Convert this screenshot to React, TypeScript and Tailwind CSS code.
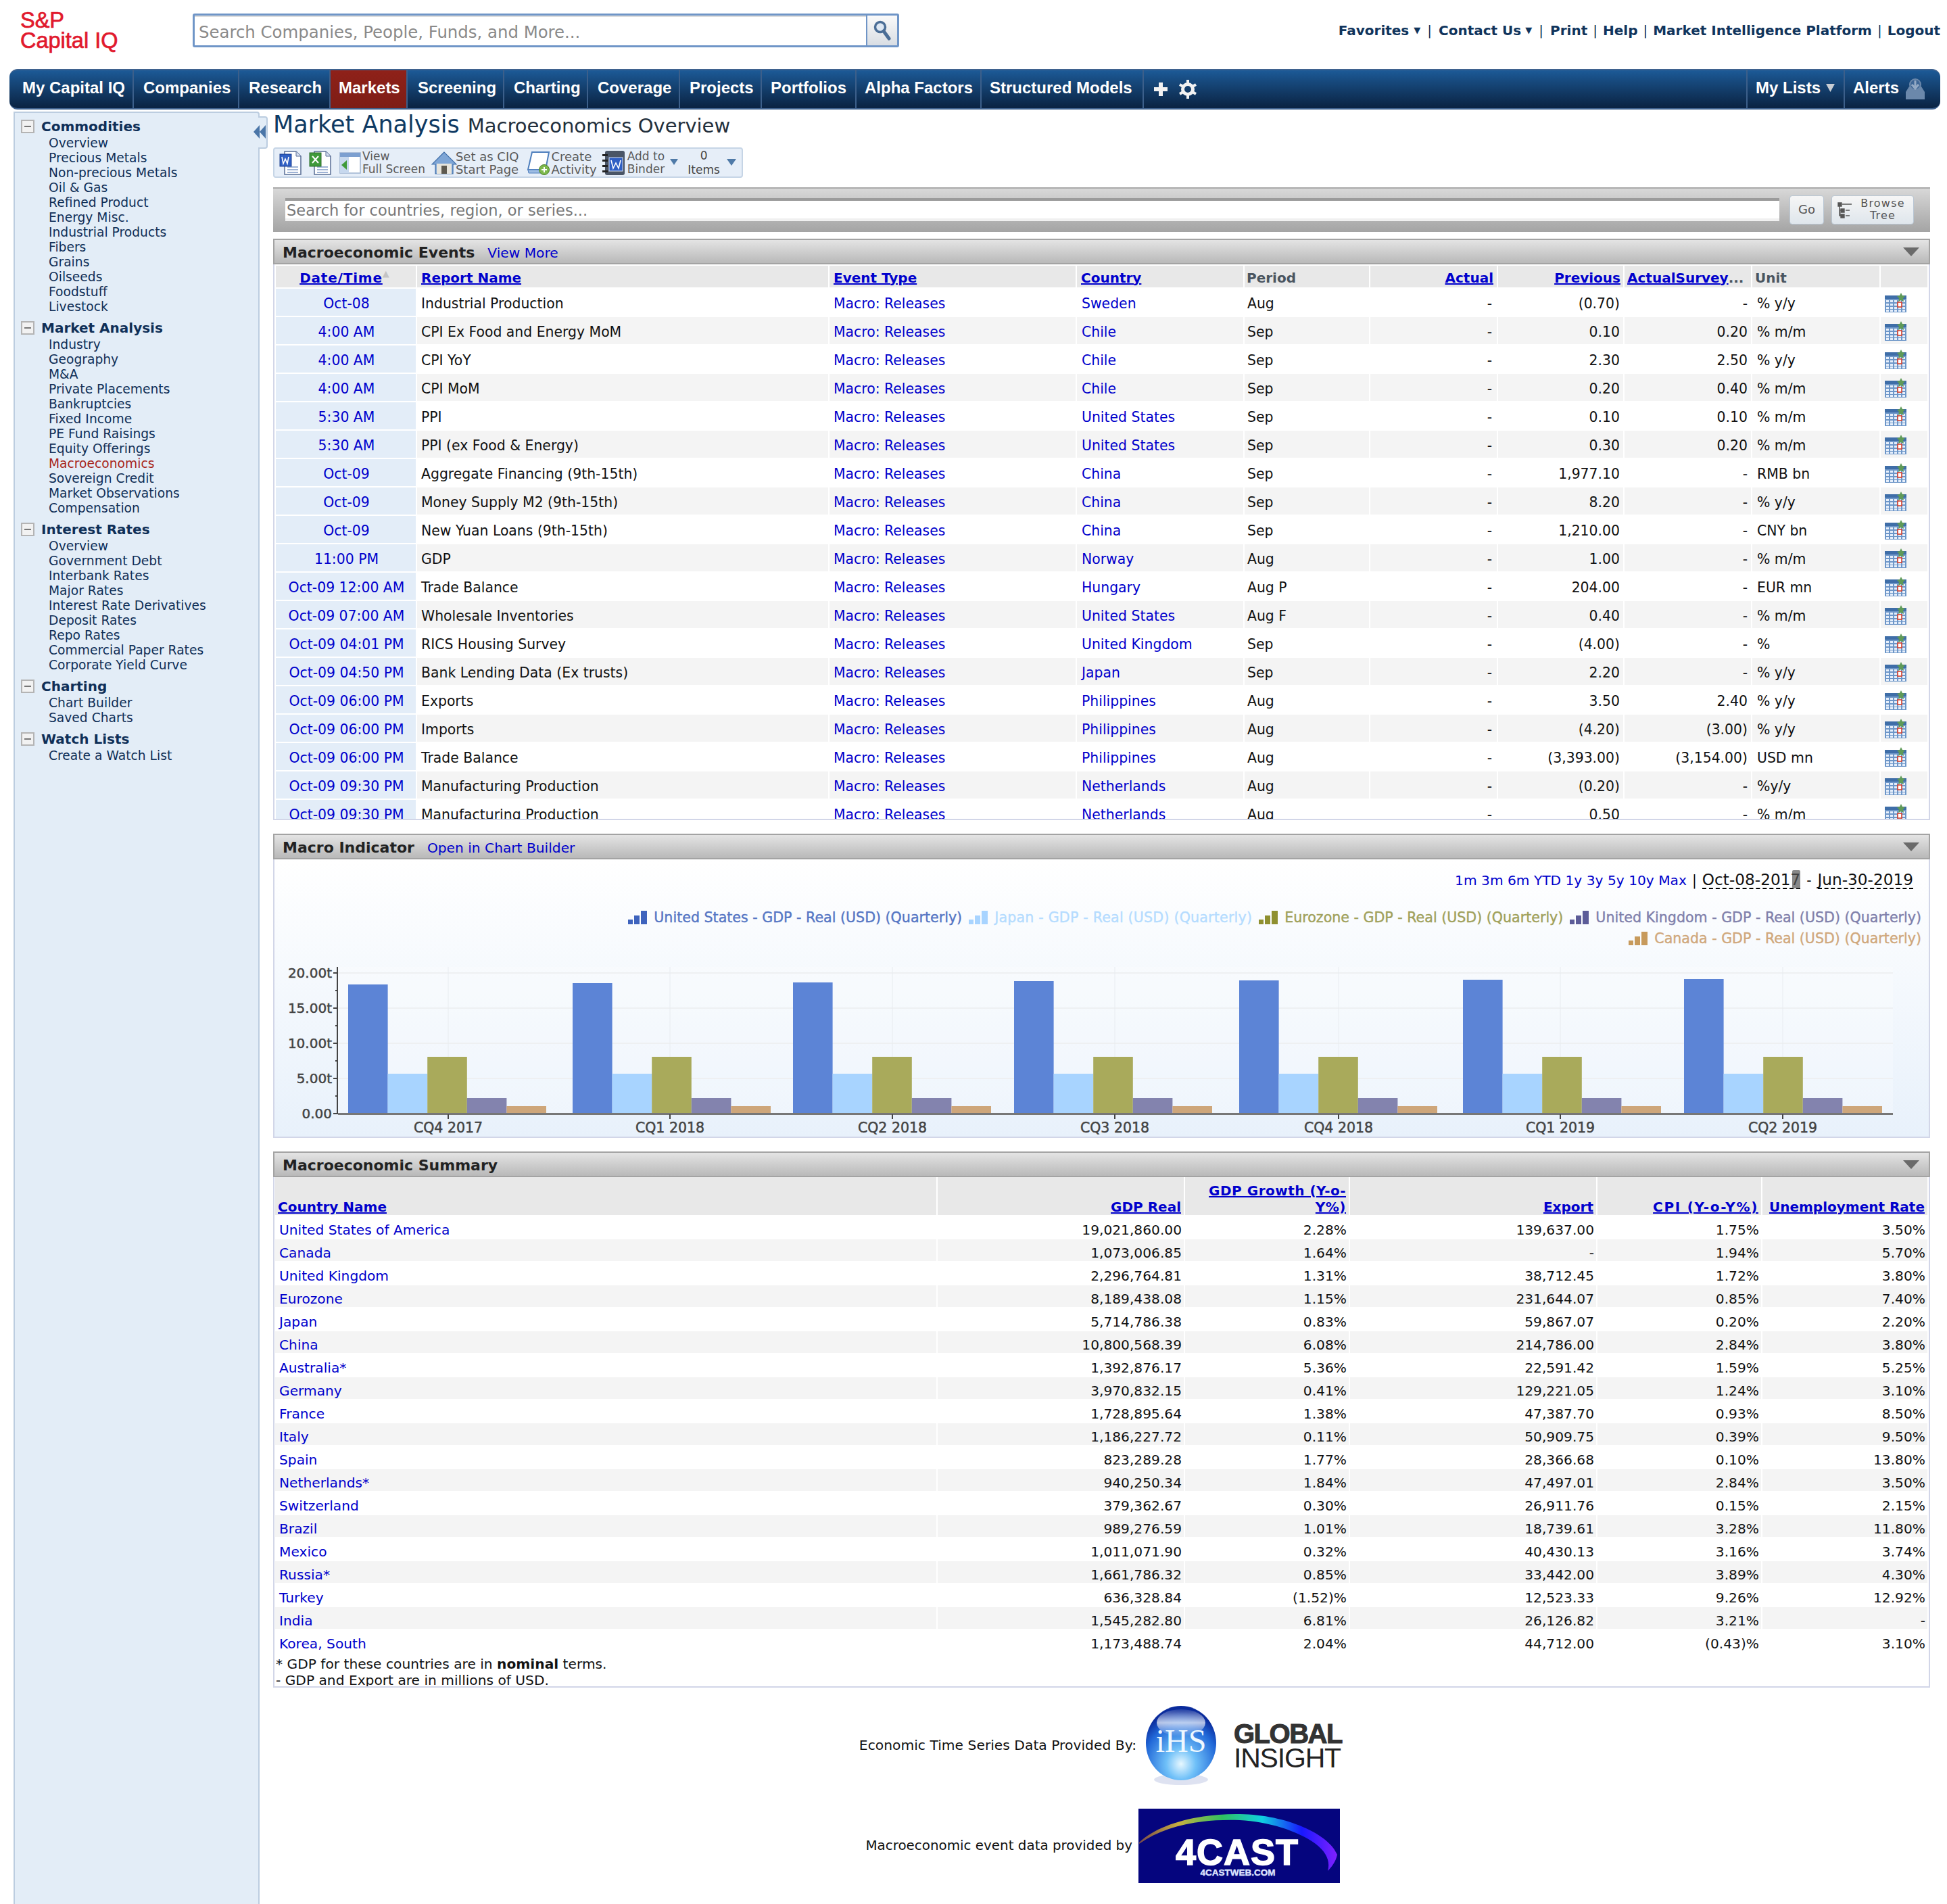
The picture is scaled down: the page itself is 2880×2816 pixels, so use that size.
import React from "react";

const VS = "font-['DejaVu_Sans',Verdana,sans-serif]";

const nav: [string, string][] = [
  ["My Capital IQ", "w-[184px] pl-[19px]"],
  ["Companies", "w-[156px] pl-[14px]"],
  ["Research", "w-[135px] pl-[14px]"],
  ["Markets", "w-[114px] pl-[12px] bg-linear-to-b from-[#8f2119] to-[#7d1d16]"],
  ["Screening", "w-[143px] pl-[15px]"],
  ["Charting", "w-[124px] pl-[14px]"],
  ["Coverage", "w-[136px] pl-[14px]"],
  ["Projects", "w-[121px] pl-[14px]"],
  ["Portfolios", "w-[140px] pl-[13px]"],
  ["Alpha Factors", "w-[185px] pl-[12px]"],
  ["Structured Models", "w-[240px] pl-[12px]"],
];

const side: [string, string[]][] = [
  ["Commodities", ["Overview", "Precious Metals", "Non-precious Metals", "Oil & Gas", "Refined Product", "Energy Misc.", "Industrial Products", "Fibers", "Grains", "Oilseeds", "Foodstuff", "Livestock"]],
  ["Market Analysis", ["Industry", "Geography", "M&A", "Private Placements", "Bankruptcies", "Fixed Income", "PE Fund Raisings", "Equity Offerings", "Macroeconomics", "Sovereign Credit", "Market Observations", "Compensation"]],
  ["Interest Rates", ["Overview", "Government Debt", "Interbank Rates", "Major Rates", "Interest Rate Derivatives", "Deposit Rates", "Repo Rates", "Commercial Paper Rates", "Corporate Yield Curve"]],
  ["Charting", ["Chart Builder", "Saved Charts"]],
  ["Watch Lists", ["Create a Watch List"]],
];

const ev: string[][] = [
  ["Oct-08", "Industrial Production", "Sweden", "Aug", "(0.70)", "-", "% y/y"],
  ["4:00 AM", "CPI Ex Food and Energy MoM", "Chile", "Sep", "0.10", "0.20", "% m/m"],
  ["4:00 AM", "CPI YoY", "Chile", "Sep", "2.30", "2.50", "% y/y"],
  ["4:00 AM", "CPI MoM", "Chile", "Sep", "0.20", "0.40", "% m/m"],
  ["5:30 AM", "PPI", "United States", "Sep", "0.10", "0.10", "% m/m"],
  ["5:30 AM", "PPI (ex Food & Energy)", "United States", "Sep", "0.30", "0.20", "% m/m"],
  ["Oct-09", "Aggregate Financing (9th-15th)", "China", "Sep", "1,977.10", "-", "RMB bn"],
  ["Oct-09", "Money Supply M2 (9th-15th)", "China", "Sep", "8.20", "-", "% y/y"],
  ["Oct-09", "New Yuan Loans (9th-15th)", "China", "Sep", "1,210.00", "-", "CNY bn"],
  ["11:00 PM", "GDP", "Norway", "Aug", "1.00", "-", "% m/m"],
  ["Oct-09 12:00 AM", "Trade Balance", "Hungary", "Aug P", "204.00", "-", "EUR mn"],
  ["Oct-09 07:00 AM", "Wholesale Inventories", "United States", "Aug F", "0.40", "-", "% m/m"],
  ["Oct-09 04:01 PM", "RICS Housing Survey", "United Kingdom", "Sep", "(4.00)", "-", "%"],
  ["Oct-09 04:50 PM", "Bank Lending Data (Ex trusts)", "Japan", "Sep", "2.20", "-", "% y/y"],
  ["Oct-09 06:00 PM", "Exports", "Philippines", "Aug", "3.50", "2.40", "% y/y"],
  ["Oct-09 06:00 PM", "Imports", "Philippines", "Aug", "(4.20)", "(3.00)", "% y/y"],
  ["Oct-09 06:00 PM", "Trade Balance", "Philippines", "Aug", "(3,393.00)", "(3,154.00)", "USD mn"],
  ["Oct-09 09:30 PM", "Manufacturing Production", "Netherlands", "Aug", "(0.20)", "-", "%y/y"],
  ["Oct-09 09:30 PM", "Manufacturing Production", "Netherlands", "Aug", "0.50", "-", "% m/m"],
];

const sum: string[][] = [
  ["United States of America", "19,021,860.00", "2.28%", "139,637.00", "1.75%", "3.50%"],
  ["Canada", "1,073,006.85", "1.64%", "-", "1.94%", "5.70%"],
  ["United Kingdom", "2,296,764.81", "1.31%", "38,712.45", "1.72%", "3.80%"],
  ["Eurozone", "8,189,438.08", "1.15%", "231,644.07", "0.85%", "7.40%"],
  ["Japan", "5,714,786.38", "0.83%", "59,867.07", "0.20%", "2.20%"],
  ["China", "10,800,568.39", "6.08%", "214,786.00", "2.84%", "3.80%"],
  ["Australia*", "1,392,876.17", "5.36%", "22,591.42", "1.59%", "5.25%"],
  ["Germany", "3,970,832.15", "0.41%", "129,221.05", "1.24%", "3.10%"],
  ["France", "1,728,895.64", "1.38%", "47,387.70", "0.93%", "8.50%"],
  ["Italy", "1,186,227.72", "0.11%", "50,909.75", "0.39%", "9.50%"],
  ["Spain", "823,289.28", "1.77%", "28,366.68", "0.10%", "13.80%"],
  ["Netherlands*", "940,250.34", "1.84%", "47,497.01", "2.84%", "3.50%"],
  ["Switzerland", "379,362.67", "0.30%", "26,911.76", "0.15%", "2.15%"],
  ["Brazil", "989,276.59", "1.01%", "18,739.61", "3.28%", "11.80%"],
  ["Mexico", "1,011,071.90", "0.32%", "40,430.13", "3.16%", "3.74%"],
  ["Russia*", "1,661,786.32", "0.85%", "33,442.00", "3.89%", "4.30%"],
  ["Turkey", "636,328.84", "(1.52)%", "12,523.33", "9.26%", "12.92%"],
  ["India", "1,545,282.80", "6.81%", "26,126.82", "3.21%", "-"],
  ["Korea, South", "1,173,488.74", "2.04%", "44,712.00", "(0.43)%", "3.10%"],
];

const LINK = "text-[#0000cc]";
const HLINK = "font-bold text-[20px] text-[#0000cc] underline";

function Minus() {
  return (
    <svg width="20" height="20" viewBox="0 0 20 20" className="shrink-0">
      <rect x="1" y="1" width="18" height="18" fill="#f2f2f2" stroke="#b4b4b4" strokeWidth="2" />
      <rect x="5" y="9" width="10" height="2" fill="#777" />
    </svg>
  );
}

function Tri({ c = "#666", w = 20, h = 12 }: { c?: string; w?: number; h?: number }) {
  return (
    <svg width={w} height={h} viewBox="0 0 20 12" className="shrink-0" preserveAspectRatio="none">
      <path d="M0 0H20L10 12Z" fill={c} />
    </svg>
  );
}

function Cal() {
  return (
    <svg width="32" height="29" viewBox="0 0 32 29">
      <rect x="0" y="4" width="32" height="25" fill="#6d96c8" />
      <rect x="0" y="4" width="32" height="5" fill="#3f6ea8" />
      <g fill="#e6effb">
        {[11, 16, 21, 25].map((y) =>
          [2, 8, 14, 20, 26].map((x) => <rect key={x + "-" + y} x={x} y={y} width="4" height="3" />)
        )}
      </g>
      <rect x="19" y="14" width="6" height="7" fill="#fff" stroke="#d8402c" strokeWidth="1.6" />
      <path d="M24 0l2 4 4 1-3 3 1 5-4-2-4 2 1-5-3-3 4-1z" fill="#5f9a58" />
    </svg>
  );
}

function Doc({ kind }: { kind: "w" | "x" }) {
  return (
    <svg width="34" height="36" viewBox="0 0 34 36" className="shrink-0">
      <path d="M8 1h17l7 7v27H8z" fill="#fff" stroke="#5a6f95" strokeWidth="1.5" />
      <path d="M25 1v7h7" fill="#d5def0" stroke="#5a6f95" />
      <path d="M12 24h16M12 28h16M12 32h16" stroke="#7f9bc8" strokeWidth="1.5" />
      {kind === "w" ? (
        <>
          <rect x="1" y="5" width="17" height="18" fill="#2f5fc4" stroke="#1c3f90" />
          <path d="M4 9l2 10 3-7 3 7 2-10" fill="none" stroke="#fff" strokeWidth="1.6" />
        </>
      ) : (
        <>
          <rect x="1" y="3" width="17" height="20" fill="#3f9a3a" stroke="#2a6b2a" />
          <path d="M5 8l9 10M14 8L5 18" fill="none" stroke="#fff" strokeWidth="2" />
        </>
      )}
    </svg>
  );
}

function IconWindow() {
  return (
    <svg width="32" height="34" viewBox="0 0 32 34" className="shrink-0">
      <rect x="1" y="2" width="30" height="30" fill="#fff" stroke="#9db2cf" strokeWidth="1.5" />
      <rect x="1" y="2" width="30" height="6" fill="#7c9fd0" />
      <rect x="1" y="8" width="13" height="24" fill="#c7d8ee" />
      <path d="M11 13v14l-8-7z" fill="#3f9a3a" />
    </svg>
  );
}

function IconHome() {
  return (
    <svg width="38" height="34" viewBox="0 0 38 34" className="shrink-0">
      <path d="M19 1L1 19h5v14h26V19h5z" fill="#7fa6d6" stroke="#3f6ea8" strokeWidth="1.2" />
      <rect x="8" y="18" width="22" height="15" fill="#e8e5dc" />
      <rect x="15" y="21" width="8" height="12" fill="#5e5a50" />
    </svg>
  );
}

function IconScroll() {
  return (
    <svg width="36" height="36" viewBox="0 0 36 36" className="shrink-0">
      <path d="M8 2h25l-5 26H2z" fill="#fff" stroke="#4f7fbd" strokeWidth="2" />
      <path d="M2 28h24v5H3z" fill="#9dbce3" stroke="#4f7fbd" />
      <circle cx="26" cy="28" r="7.5" fill="#7db84c" stroke="#4c7f2a" />
      <path d="M26 24v8M22 28h8" stroke="#fff" strokeWidth="2" />
    </svg>
  );
}

function IconBinder() {
  return (
    <svg width="34" height="38" viewBox="0 0 34 38" className="shrink-0">
      <rect x="4" y="1" width="29" height="36" rx="3" fill="#4a5566" />
      <rect x="0" y="6" width="8" height="3" fill="#222" />
      <rect x="0" y="14" width="8" height="3" fill="#222" />
      <rect x="0" y="22" width="8" height="3" fill="#222" />
      <rect x="0" y="30" width="8" height="3" fill="#222" />
      <rect x="10" y="11" width="20" height="20" fill="#2f5fc4" stroke="#d4e0f5" />
      <path d="M13 15l3 12 4-8 4 8 3-12" fill="none" stroke="#fff" strokeWidth="1.6" />
    </svg>
  );
}

function Panel({ title, extra }: { title: string; extra?: string }) {
  return (
    <div className="h-[38px] flex items-center border-2 border-[#a3a3a3] bg-linear-to-b from-[#e4e4e4] to-[#b9b9b9] pl-[12px] pr-[14px]">
      <span className="font-bold text-[22px] text-[#222] pt-[3px]">{title}</span>
      {extra && <span className={`ml-[19px] text-[20.2px] pt-[3px] ${LINK}`}>{extra}</span>}
      <span className="ml-auto">
        <Tri c="#6a6a6a" w={24} h={13} />
      </span>
    </div>
  );
}

const evW = ["w-[207px]", "w-[608px]", "w-[364px]", "w-[246px]", "w-[184px]", "w-[187px]", "w-[185px]", "w-[187px]", "w-[188px]", "w-[69px]"];

function EventsHead() {
  const H = "h-[32px] bg-[#e8e8e8] flex items-center shrink-0 pt-[3px] text-[20px]";
  return (
    <div className="flex gap-[2px] h-[34px] mt-[2px]">
      <div className={`${H} ${evW[0]} justify-center pr-[4px]`}>
        <span className={`${HLINK} tracking-[0.8px]`}>Date/Time</span>
        <span className="text-[#c4c4c4] text-[13px] -mt-[12px]">▲</span>
      </div>
      <div className={`${H} ${evW[1]} pl-[6px]`}><span className={HLINK}>Report Name</span></div>
      <div className={`${H} ${evW[2]} pl-[6px]`}><span className={HLINK}>Event Type</span></div>
      <div className={`${H} ${evW[3]} pl-[6px]`}><span className={HLINK}>Country</span></div>
      <div className={`${H} ${evW[4]} pl-[3px] font-bold text-[#4a5560]`}>Period</div>
      <div className={`${H} ${evW[5]} justify-end pr-[5px]`}><span className={HLINK}>Actual</span></div>
      <div className={`${H} ${evW[6]} justify-end pr-[4px]`}><span className={HLINK}>Previous</span></div>
      <div className={`${H} ${evW[7]} pl-[4px] overflow-hidden whitespace-nowrap`}><span className={HLINK}>ActualSurvey</span><span className="font-bold text-[#4a5560]">...</span></div>
      <div className={`${H} ${evW[8]} pl-[4px] font-bold text-[#4a5560]`}>Unit</div>
      <div className={`${H} ${evW[9]}`} />
    </div>
  );
}

function EventRow({ r, i }: { r: string[]; i: number }) {
  const bg = i % 2 ? "bg-[#f4f4f4]" : "bg-white";
  const C = `h-[40px] flex items-center shrink-0 pt-[3px] ${bg}`;
  return (
    <div className="flex gap-[2px] h-[42px]">
      <div className={`h-[40px] flex items-center justify-center pt-[3px] pl-[2px] shrink-0 bg-[#e3edf8] ${evW[0]} ${LINK}`}>{r[0]}</div>
      <div className={`${C} ${evW[1]} pl-[6px]`}>{r[1]}</div>
      <div className={`${C} ${evW[2]} pl-[6px] ${LINK}`}>Macro: Releases</div>
      <div className={`${C} ${evW[3]} pl-[7px] ${LINK}`}>{r[2]}</div>
      <div className={`${C} ${evW[4]} pl-[4px]`}>{r[3]}</div>
      <div className={`${C} ${evW[5]} justify-end pr-[7px]`}>-</div>
      <div className={`${C} ${evW[6]} justify-end pr-[5px]`}>{r[4]}</div>
      <div className={`${C} ${evW[7]} justify-end pr-[5px]`}>{r[5]}</div>
      <div className={`${C} ${evW[8]} pl-[7px]`}>{r[6]}</div>
      <div className={`h-[40px] flex items-center shrink-0 ${bg} ${evW[9]} pl-[6px]`}><Cal /></div>
    </div>
  );
}

const sW = ["w-[978px]", "w-[364px]", "w-[242px]", "w-[364px]", "w-[242px]", "w-[244px]"];

function SumHead() {
  const H = "h-[56px] bg-[#e8e8e8] flex items-end justify-end text-right pr-[4px] shrink-0 leading-[24px]";
  return (
    <div className="flex gap-[2px] h-[56px]">
      <div className={`${H} ${sW[0]} !justify-start pl-[4px]`}><span className={HLINK}>Country Name</span></div>
      <div className={`${H} ${sW[1]}`}><span className={HLINK}>GDP Real</span></div>
      <div className={`${H} ${sW[2]}`}><span className={`${HLINK} tracking-[0.5px]`}>GDP Growth (Y-o-<br />Y%)</span></div>
      <div className={`${H} ${sW[3]}`}><span className={HLINK}>Export</span></div>
      <div className={`${H} ${sW[4]}`}><span className={`${HLINK} tracking-[1.7px]`}>CPI (Y-o-Y%)</span></div>
      <div className={`${H} ${sW[5]}`}><span className={HLINK}>Unemployment Rate</span></div>
    </div>
  );
}

function SumRow({ r, i }: { r: string[]; i: number }) {
  const bg = i % 2 ? "bg-[#f4f4f4]" : "bg-white";
  const C = `h-[32px] flex items-center justify-end pr-[3px] pt-[8px] shrink-0 ${bg}`;
  return (
    <div className="flex gap-[2px] h-[32px] mt-[2px] text-[20.2px]">
      <div className={`h-[32px] flex items-center pl-[6px] pt-[8px] shrink-0 ${bg} ${sW[0]} ${LINK}`}>{r[0]}</div>
      {r.slice(1).map((v, k) => (
        <div key={k} className={`${C} ${sW[k + 1]}`}>{v}</div>
      ))}
    </div>
  );
}

const groups = [515, 847, 1173, 1500, 1833, 2164, 2491];
const tops = [1456, 1454, 1453, 1451, 1450, 1449, 1448];
const ticks: [number, string][] = [[663, "CQ4 2017"], [991, "CQ1 2018"], [1320, "CQ2 2018"], [1649, "CQ3 2018"], [1980, "CQ4 2018"], [2308, "CQ1 2019"], [2637, "CQ2 2019"]];
const yl: [number, string][] = [[1439, "20.00t"], [1491, "15.00t"], [1543, "10.00t"], [1595, "5.00t"], [1647, "0.00"]];
const BASE = 1647;

function Chart() {
  return (
    <svg width="2447" height="263" viewBox="406 1420 2447 263" className="block">
      <rect x="500" y="1430" width="2300" height="217" fill="#ffffff" fillOpacity="0.25" />
      {yl.slice(0, 4).map(([y]) => <line key={y} x1="500" x2="2800" y1={y} y2={y} stroke="#eef0f2" strokeWidth="2" />)}
      {ticks.map(([x]) => <line key={x} x1={x} x2={x} y1="1430" y2="1647" stroke="#e8ecf0" strokeWidth="1" />)}
      {groups.map((g, i) => {
        const w = 58.6;
        const tt = [tops[i], 1588, 1563, 1624, 1636];
        const col = ["#5c84d6", "#a8d4ff", "#a9aa5b", "#8383ae", "#cea67a"];
        return (
          <g key={g}>
            {tt.map((t, k) => (
              <rect key={k} x={g + k * w} y={t} width={w} height={BASE - t} fill={col[k]} />
            ))}
          </g>
        );
      })}
      <line x1="500" x2="2800" y1="1647.5" y2="1647.5" stroke="#777" strokeWidth="3" />
      <line x1="499" x2="499" y1="1430" y2="1648" stroke="#444" strokeWidth="2" />
      {yl.map(([y]) => <line key={y} x1="493" x2="500" y1={y} y2={y} stroke="#444" strokeWidth="2" />)}
      {[1465, 1517, 1569, 1621].map((y) => <line key={y} x1="496" x2="500" y1={y} y2={y} stroke="#444" strokeWidth="2" />)}
      {ticks.map(([x]) => <line key={x} x1={x} x2={x} y1="1648" y2="1655" stroke="#444" strokeWidth="2" />)}
      <g fontFamily="DejaVu Sans" fill="#444" stroke="#444" strokeWidth="0.5">
        {yl.map(([y, t]) => <text key={t} x="491" y={y + 7} textAnchor="end" fontSize="20">{t}</text>)}
        {ticks.map(([x, t]) => <text key={t} x={x} y="1675" textAnchor="middle" fontSize="20.5">{t}</text>)}
      </g>
    </svg>
  );
}

function LegIcon({ a }: { a: string }) {
  return (
    <svg width="29" height="20" viewBox="0 0 29 20" className="shrink-0 mr-[9px]">
      <rect x="0" y="13" width="7" height="7" fill={a} />
      <rect x="9" y="7" width="8" height="13" fill={a} />
      <rect x="19" y="0" width="9" height="20" fill={a} />
    </svg>
  );
}

function Legend({ label, color, dark, wide }: { label: string; color: string; dark: string; wide?: boolean }) {
  return (
    <span className="inline-flex items-center ml-[10px]" style={{ color }}>
      <LegIcon a={dark} />
      <span className={`text-[20.6px] [-webkit-text-stroke:0.4px] ${wide ? "tracking-[0.2px]" : ""}`}>{label}</span>
    </span>
  );
}

function TB({ a, b, big }: { a: string; b: string; big?: boolean }) {
  return (
    <div className={`${big ? "text-[18px]" : "text-[17px]"} leading-[19px] text-[#5a5a5a] whitespace-nowrap`}>
      <div>{a}</div>
      <div>{b}</div>
    </div>
  );
}

export default function App() {
  return (
    <div className={`relative w-[2880px] h-[2816px] overflow-hidden bg-white text-[20.4px] leading-[24px] text-[#111] ${VS}`}>
      {/* header */}
      <div className="h-[102px] flex">
        <div className="w-[285px] pl-[30px] pt-[15px] font-['Liberation_Sans',Arial,sans-serif] text-[32.5px] leading-[30px] text-[#e1192d] [-webkit-text-stroke:0.7px_#e1192d]">
          <div>S&amp;P</div>
          <div>Capital IQ</div>
        </div>
        <div className="mt-[20px] w-[1045px] h-[50px] flex border-[3px] border-[#6f95c7] rounded-[3px]">
          <div className="flex-1 flex items-center pl-[6px] pt-[3px] text-[24.4px] text-[#8a8a8a] bg-white border-t-2 border-[#ddd]">Search Companies, People, Funds, and More...</div>
          <div className="w-[46px] flex items-center justify-center border-l-2 border-[#6f95c7] bg-linear-to-b from-[#fafafa] to-[#d8dde3]">
            <svg width="26" height="30" viewBox="0 0 26 30">
              <circle cx="10" cy="10" r="7.5" fill="#dde7f3" stroke="#4a6d96" strokeWidth="3.5" />
              <path d="M15 16l8 11" stroke="#4a6d96" strokeWidth="5" strokeLinecap="round" />
            </svg>
          </div>
        </div>
        <div className="ml-auto pr-[10px] pt-[32px] flex items-center h-[58px] font-bold text-[20px] text-[#10345c] whitespace-nowrap">
          <span>Favorites</span><span className="text-[13px] ml-[7px]">▼</span>
          <span className="ml-[10px] mr-[10px] font-normal">|</span>
          <span>Contact Us</span><span className="text-[13px] ml-[6px]">▼</span>
          <span className="ml-[10px] mr-[10px] font-normal">|</span>
          <span>Print</span>
          <span className="mx-[8px] font-normal">|</span>
          <span>Help</span>
          <span className="mx-[8px] font-normal">|</span>
          <span>Market Intelligence Platform</span>
          <span className="mx-[8px] font-normal">|</span>
          <span>Logout</span>
        </div>
      </div>

      {/* nav */}
      <div className="ml-[14px] mr-[10px] h-[60px] rounded-[12px] overflow-hidden flex bg-linear-to-b from-[#1c5a97] to-[#0a2342] border-t-2 border-b-2 border-[#3f628f] font-['Liberation_Sans',Arial,sans-serif] font-bold text-[24px] text-white">
        {nav.map(([t, c]) => (
          <div key={t} className={`${c} shrink-0 flex items-center pb-[4px] border-r-2 border-[#3c5f8a] whitespace-nowrap`}>{t}</div>
        ))}
        <div className="flex items-center pl-[15px] gap-[17px]">
          <svg width="20" height="20" viewBox="0 0 20 20"><path d="M7 0h6v7h7v6h-7v7H7v-7H0V7h7z" fill="#f2f2f2" /></svg>
          <svg width="26" height="28" viewBox="0 0 26 28"><circle cx="13" cy="14" r="7.5" fill="none" stroke="#f2f2f2" strokeWidth="5" /><path d="M13 0v6M13 22v6M1 7l5 3M20 18l5 3M1 21l5-3M20 10l5-3" stroke="#f2f2f2" strokeWidth="4" /></svg>
        </div>
        <div className="ml-auto flex">
          <div className="w-[144px] pl-[12px] pb-[4px] flex items-center border-l-2 border-[#3c5f8a]">My Lists<span className="ml-[8px]"><Tri c="#c8cdd3" w={13} h={12} /></span></div>
          <div className="w-[143px] pl-[12px] flex items-center border-l-2 border-[#3c5f8a]"><span className="pb-[4px]">Alerts</span>
            <svg width="30" height="32" viewBox="0 0 30 32" className="ml-[9px]">
              <path d="M6 12L1 20v11h28V20l-5-8" fill="#6b88ab" />
              <circle cx="15" cy="9" r="8" fill="#3f6796" stroke="#6b88ab" strokeWidth="2" />
              <path d="M15 3v10M10 9l5 6 5-6" fill="none" stroke="#93a9c4" strokeWidth="3" />
            </svg>
          </div>
        </div>
      </div>

      <div className="flex mt-[3px] h-[2652px]">
        {/* sidebar */}
        <div className="relative ml-[20px] w-[364px] shrink-0 bg-[#e3edf7] border-l-2 border-r-2 border-t-2 border-[#bccde0] pt-[7px] pl-[9px] text-[#0f2f57] rounded-tr-[4px]">
          {side.map(([h, items]) => (
            <div key={h} className="mb-[7px]">
              <div className="h-[27px] flex items-center font-bold text-[20px] pb-[1px]">
                <Minus />
                <span className="ml-[10px]">{h}</span>
              </div>
              <div className="pl-[41px] leading-[22px] text-[18.7px]">
                {items.map((it, i) => (
                  <div key={i} className={`h-[22px] ${it === "Macroeconomics" ? "text-[#a8261c]" : ""}`}>{it}</div>
                ))}
              </div>
            </div>
          ))}
          <div className="absolute -right-[14px] top-[5px] w-[14px] h-[48px] bg-[#e3edf7] border-2 border-l-0 border-[#bccde0] rounded-r-[4px]">
          </div>
          <svg width="18" height="20" viewBox="0 0 18 20" className="absolute -right-[11px] top-[18px]">
            <path d="M9 0v20L0 10zM18 0v20L9 10z" fill="#4b76a8" />
          </svg>
        </div>

        {/* main */}
        <div className="ml-[20px] w-[2451px] shrink-0">
          <div className="h-[53px] flex items-baseline text-[#0f3a63] text-[35px] leading-[38px] whitespace-nowrap">
            <span>Market Analysis</span>
            <span className="ml-[12px] text-[29px] text-[#222f3c]">Macroeconomics Overview</span>
          </div>

          {/* toolbar */}
          <div className="w-[695px] h-[45px] rounded-[4px] border-2 border-[#c6d5e6] bg-[#e6eef8] flex items-center pl-[7px]">
            <Doc kind="w" />
            <span className="ml-[10px]"><Doc kind="x" /></span>
            <span className="ml-[11px]"><IconWindow /></span>
            <span className="ml-[2px]"><TB a="View" b="Full Screen" /></span>
            <span className="ml-[9px]"><IconHome /></span>
            <span className="-ml-[2px]"><TB a="Set as CIQ" b="Start Page" big /></span>
            <span className="ml-[12px]"><IconScroll /></span>
            <span className="ml-[0px]"><TB a="Create" b="Activity" big /></span>
            <span className="ml-[8px]"><IconBinder /></span>
            <span className="ml-[3px]"><TB a="Add to" b="Binder" /></span>
            <span className="ml-[8px] -mt-[2px]"><Tri c="#4f7aa8" w={12} h={9} /></span>
            <div className="ml-[11px] text-[17px] leading-[21px] text-[#444] text-center w-[54px]"><div>0</div><div>Items</div></div>
            <span className="ml-[7px] -mt-[2px]"><Tri c="#4f7aa8" w={14} h={10} /></span>
          </div>

          {/* search */}
          <div className="mt-[14px] h-[66px] bg-linear-to-b from-[#d8d8d8] to-[#a4a4a4] border-t-2 border-[#a9a9a9] flex items-center pl-[18px] pb-[2px]">
            <div className="w-[2210px] h-[34px] bg-white border-t-4 border-b-4 border-t-[#9b9b9b] border-b-[#f0f0f0] flex items-center text-[22.5px] text-[#777] pl-[2px] pt-[2px] leading-none">
              Search for countries, region, or series...
            </div>
            <div className="ml-[15px] w-[51px] h-[43px] rounded-[4px] bg-linear-to-b from-[#f6f6f6] to-[#dfe6ec] border border-[#b9c6d3] flex items-center justify-center text-[#555] text-[18px]">Go</div>
            <div className="ml-[11px] w-[122px] h-[43px] rounded-[4px] bg-linear-to-b from-[#f6f6f6] to-[#dfe6ec] border border-[#b9c6d3] flex items-center pl-[8px] text-[#555]">
              <svg width="22" height="28" viewBox="0 0 22 28" className="shrink-0">
                <path d="M1 4h5v5H1zM7 6h14M5 13h5v5H5zM5 21h5v5H5zM3 9v14h2M3 15h2M12 15h6M12 23h6" fill="#555" stroke="#555" strokeWidth="1.4" />
              </svg>
              <div className="flex-1 text-center text-[16px] leading-[18px] tracking-[1.2px]"><div>Browse</div><div>Tree</div></div>
            </div>
          </div>

          {/* events */}
          <div className="mt-[10px]">
            <Panel title="Macroeconomic Events" extra="View More" />
            <div className="h-[822px] overflow-hidden border-2 border-t-0 border-[#d2d6e8] pl-[2px] whitespace-nowrap">
              <EventsHead />
              {ev.map((r, i) => <EventRow key={i} r={r} i={i} />)}
            </div>
          </div>

          {/* macro indicator */}
          <div className="mt-[20px]">
            <Panel title="Macro Indicator" extra="Open in Chart Builder" />
            <div className="h-[412px] border-2 border-t-0 border-[#d2d6e8] bg-linear-to-b from-white to-[#e8f1fb] whitespace-nowrap">
              <div className="h-[60px] flex items-center justify-end pr-[23px] pt-[2px]">
                <span className={`${LINK} text-[20.2px]`}>1m 3m 6m YTD 1y 3y 5y 10y Max</span>
                <span className="mx-[8px]">|</span>
                <span className="relative border-b-2 border-dashed border-black text-[23.2px]">Oct-08-2017<span className="absolute right-[0px] -top-[2px] w-[12px] h-[27px] bg-[#555] opacity-70 rounded-[2px]" /></span>
                <span className="mx-[9px]">-</span>
                <span className="border-b-2 border-dashed border-black text-[23.2px]">Jun-30-2019</span>
              </div>
              <div className="mt-[10px] flex justify-end pr-[11px] h-[31px] items-center">
                <Legend label="United States - GDP - Real (USD) (Quarterly)" color="#5576c4" dark="#3e63bd" />
                <Legend label="Japan - GDP - Real (USD) (Quarterly)" color="#b5dcff" dark="#a8d4ff" wide />
                <Legend label="Eurozone - GDP - Real (USD) (Quarterly)" color="#a0a15b" dark="#8f9030" />
                <Legend label="United Kingdom - GDP - Real (USD) (Quarterly)" color="#8080ab" dark="#5c5c98" />
              </div>
              <div className="flex justify-end pr-[11px] h-[31px] items-center">
                <Legend label="Canada - GDP - Real (USD) (Quarterly)" color="#d0a87c" dark="#c79a5c" />
              </div>
              <div className="mt-[17px]"><Chart /></div>
            </div>
          </div>

          {/* summary */}
          <div className="mt-[20px]">
            <Panel title="Macroeconomic Summary" />
            <div className="h-[755px] border-2 border-t-0 border-[#d2d6e8] pl-[1px] whitespace-nowrap overflow-hidden">
              <SumHead />
              {sum.map((r, i) => <SumRow key={i} r={r} i={i} />)}
              <div className="mt-[6px] pl-[1px] text-[20.2px]">
                <div>* GDP for these countries are in <b>nominal</b> terms.</div>
                <div>- GDP and Export are in millions of USD.</div>
              </div>
            </div>
          </div>

          {/* attribution */}
          <div className="w-[1581px] mt-[28px] flex justify-end items-center h-[115px]">
            <span className="mr-[13px] mt-[-1px] text-[20.3px]">Economic Time Series Data Provided By:</span>
            <svg width="110" height="120" viewBox="0 0 110 120" className="shrink-0">
              <defs>
                <radialGradient id="ihsA" cx="50%" cy="78%" r="70%">
                  <stop offset="0" stopColor="#e8f8ff" />
                  <stop offset="0.3" stopColor="#6fc0f8" />
                  <stop offset="0.75" stopColor="#2168d8" />
                  <stop offset="1" stopColor="#0a2b9c" />
                </radialGradient>
                <linearGradient id="ihsB" x1="0" x2="0" y1="0" y2="1">
                  <stop offset="0" stopColor="#fff" stopOpacity="0.1" />
                  <stop offset="0.5" stopColor="#fff" stopOpacity="0.7" />
                  <stop offset="1" stopColor="#fff" stopOpacity="0" />
                </linearGradient>
              </defs>
              <ellipse cx="53" cy="110" rx="40" ry="8" fill="#c8cfe8" opacity="0.6" />
              <ellipse cx="53" cy="56" rx="52" ry="55" fill="url(#ihsA)" />
              <ellipse cx="53" cy="26" rx="36" ry="20" fill="url(#ihsB)" />
              <text x="53" y="69" textAnchor="middle" fontFamily="Liberation Serif" fontSize="48" fill="#eef8ff">iHS</text>
            </svg>
            <div className="ml-[21px] w-[160px] font-['Liberation_Sans',Arial,sans-serif] text-[#333] leading-[36px]">
              <div className="font-bold text-[40px] tracking-[-1.5px] [-webkit-text-stroke:1px_#333]">GLOBAL</div>
              <div className="text-[41px] tracking-[-1.2px] text-[#222]">INSIGHT</div>
            </div>
          </div>
          <div className="w-[1578px] mt-[36px] flex justify-end items-center">
            <span className="mr-[9px] text-[19.9px]">Macroeconomic event data provided by</span>
            <div className="relative w-[298px] h-[110px] bg-[#05057e] overflow-hidden text-center font-['Liberation_Sans',Arial,sans-serif] text-white font-bold shrink-0">
              <svg width="298" height="110" viewBox="0 0 298 110" className="absolute left-0 top-0">
                <defs>
                  <linearGradient id="arc" x1="0" x2="1" y1="0" y2="0">
                    <stop offset="0" stopColor="#7a4a4a" />
                    <stop offset="0.2" stopColor="#c8b040" />
                    <stop offset="0.42" stopColor="#30c060" />
                    <stop offset="0.62" stopColor="#10d0e0" />
                    <stop offset="0.82" stopColor="#1818ff" />
                    <stop offset="1" stopColor="#8020ff" />
                  </linearGradient>
                </defs>
                <path d="M1 50C30 22 90 7 150 8c70 1 132 30 144 60-2 10-8 18-14 24 4-14-2-28-18-40C235 32 190 19 150 17 95 15 40 24 1 52z" fill="url(#arc)" />
              </svg>
              <div className="absolute left-0 right-0 top-[36px] text-[54px] leading-[56px] pr-[6px] tracking-[1px] [-webkit-text-stroke:1.5px_white]">4CAST</div>
              <div className="absolute left-0 right-0 top-[85px] text-[13.5px] leading-[20px] text-[#dfe4ff] pr-[4px] [-webkit-text-stroke:0.4px_#dfe4ff]">4CASTWEB.COM</div>
            </div>
          </div>
        </div>
      </div>
    </div>
  );
}
